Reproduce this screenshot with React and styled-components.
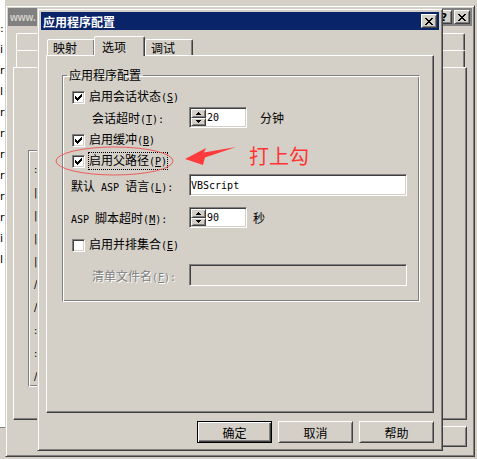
import React from "react";
import styled, { createGlobalStyle, css } from "styled-components";

const FACE = "#d4d0c8";
const SHADOW = "#808080";
const DARK = "#404040";
const NAVY = "#0a246a";

const GlobalStyle = createGlobalStyle`
  html, body { margin: 0; padding: 0; }
  body {
    background: ${FACE};
    font-family: "Noto Sans CJK SC", sans-serif;
    font-size: 12px;
    color: #000;
  }
`;

/* classic 3d edges */
const raised = css`
  border: 1px solid;
  border-color: ${FACE} ${DARK} ${DARK} ${FACE};
  box-shadow: inset 1px 1px #fff, inset -1px -1px ${SHADOW};
`;

const buttonEdge = css`
  border: 1px solid;
  border-color: #fff ${DARK} ${DARK} #fff;
  box-shadow: inset 1px 1px ${FACE}, inset -1px -1px ${SHADOW};
`;

const sunken = css`
  border: 1px solid;
  border-color: ${SHADOW} #fff #fff ${SHADOW};
  box-shadow: inset 1px 1px ${DARK}, inset -1px -1px ${FACE};
`;

const etched = css`
  border: 1px solid;
  border-color: ${SHADOW} #fff #fff ${SHADOW};
  box-shadow: inset 1px 1px #fff, inset -1px -1px ${SHADOW};
`;

const Desktop = styled.div`
  position: relative;
  width: 477px;
  height: 459px;
  overflow: hidden;
  background: ${FACE};
`;

/* list window far behind, only its right sliver shows */
const FarList = styled.ul`
  position: absolute;
  left: -60px;
  top: 0;
  width: 65px;
  height: 428px;
  margin: 0;
  padding: 18px 0 0 60px;
  box-sizing: border-box;
  list-style: none;
  background: #fff;
  border-bottom: 1px solid ${SHADOW};
  font: 11px/21px "DejaVu Sans", sans-serif;
  white-space: nowrap;
`;

/* ---------- window behind ---------- */
const BackWindow = styled.div`
  position: absolute;
  left: 5px;
  top: 5px;
  width: 470px;
  height: 452px;
  box-sizing: border-box;
  ${raised};
  background: ${FACE};
  padding: 2px;
  display: flex;
  flex-direction: column;
`;

const TitleBar = styled.div`
  height: 18px;
  flex: none;
  display: flex;
  align-items: center;
  padding: 0 2px;
  background: ${(p) => (p.$active ? NAVY : SHADOW)};
  color: ${(p) => (p.$active ? "#fff" : FACE)};
  font-weight: 700;
  font-size: 12px;
`;

const Caption = styled.span`
  flex: 1;
  white-space: nowrap;
  overflow: hidden;
  ${(p) =>
    p.$latin &&
    css`
      font-family: "Liberation Sans", sans-serif;
      font-size: 10px;
    `}
`;

const CapButton = styled.span`
  width: 16px;
  height: 14px;
  flex: none;
  box-sizing: border-box;
  ${buttonEdge};
  background: ${FACE};
  margin-left: ${(p) => p.$gap || 0}px;
  display: flex;
  align-items: center;
  justify-content: center;
  color: #000;
  font: 700 11px "DejaVu Sans", sans-serif;
`;

const BackBody = styled.div`
  flex: 1;
  display: flex;
  flex-direction: column;
  padding: 7px 5px 0;
`;

const BackTabRow = styled.div`
  display: flex;
  height: 17px;
  padding: 0 2px 0 3px;
`;

const BackTab = styled.div`
  flex: 1;
  border: 1px solid;
  border-bottom: none;
  border-color: #fff ${DARK} transparent #fff;
  border-radius: 2px 2px 0 0;
  box-shadow: inset -1px 0 ${SHADOW};
`;

const BackPanel = styled.div`
  height: 353px;
  box-sizing: border-box;
  border: 1px solid;
  border-color: #fff ${DARK} ${DARK} #fff;
  box-shadow: inset -1px -1px ${SHADOW};
  padding: 82px 0 0 14px;
`;

const BackGroup = styled.div`
  width: 300px;
  height: 237px;
  box-sizing: border-box;
  ${etched};
  padding: 10px 0 0 5px;
  display: flex;
  flex-direction: column;
  gap: 5px;
  font: 10px/18px "DejaVu Sans", sans-serif;
  white-space: nowrap;
`;

const BackButtons = styled.div`
  display: flex;
  justify-content: flex-end;
  gap: 6px;
  margin-top: 6px;
`;

/* ---------- main dialog ---------- */
const Dialog = styled.div`
  position: absolute;
  left: 37px;
  top: 8px;
  width: 406px;
  height: 443px;
  box-sizing: border-box;
  ${raised};
  background: ${FACE};
  padding: 3px;
  display: flex;
  flex-direction: column;
`;

const DialogBody = styled.div`
  flex: 1;
  display: flex;
  flex-direction: column;
  padding: 6px 5px 0;
`;

const TabStrip = styled.div`
  display: flex;
  align-items: flex-end;
  height: 19px;
  padding-left: 1px;
  position: relative;
  z-index: 1;
`;

const Tab = styled.div`
  width: ${(p) => p.$w}px;
  height: ${(p) => (p.$active ? 20 : 16)}px;
  margin-left: ${(p) => p.$ml || 0}px;
  margin-bottom: ${(p) => (p.$active ? -1 : 0)}px;
  box-sizing: border-box;
  border: 1px solid;
  border-bottom: none;
  border-color: #fff ${DARK} transparent #fff;
  border-radius: 2px 2px 0 0;
  box-shadow: inset -1px 0 ${SHADOW};
  background: ${FACE};
  position: relative;
  z-index: ${(p) => (p.$active ? 2 : 1)};
  display: flex;
  align-items: center;
  padding-left: ${(p) => (p.$active ? 7 : 5)}px;
  padding-bottom: ${(p) => (p.$active ? 1 : 0)}px;
`;

const TabPanel = styled.div`
  height: 358px;
  box-sizing: border-box;
  border: 1px solid;
  border-color: #fff ${DARK} ${DARK} #fff;
  box-shadow: inset -1px -1px ${SHADOW};
  padding: 12px 13px 0 15px;
`;

const Group = styled.fieldset`
  margin: 0;
  min-width: 0;
  padding: 7px 0 15px 8px;
  ${etched};
`;

const Legend = styled.legend`
  margin-left: -4px;
  padding: 0 2px;
  line-height: 14px;
`;

const Row = styled.div`
  display: flex;
  align-items: center;
  height: ${(p) => p.$h}px;
  margin-top: ${(p) => p.$gap || 0}px;
`;

const CheckBox = styled.span`
  width: 13px;
  height: 13px;
  flex: none;
  box-sizing: border-box;
  ${sunken};
  background: #fff;
  margin-left: 1px;
  display: flex;
`;

const CheckLabel = styled.span`
  margin-left: 4px;
  line-height: 14px;
  outline: ${(p) => (p.$focus ? "1px dotted #000" : "none")};
`;

const FieldLabel = styled.span`
  width: 118px;
  flex: none;
  box-sizing: border-box;
  padding-left: ${(p) => p.$indent || 0}px;
  white-space: nowrap;
  color: ${(p) => (p.$disabled ? SHADOW : "#000")};
  text-shadow: ${(p) => (p.$disabled ? "1px 1px #fff" : "none")};
`;

const Lat = styled.span`
  font-family: "DejaVu Sans Mono", monospace;
  font-size: 10px;
`;

const Edit = styled.div`
  width: ${(p) => p.$w}px;
  height: ${(p) => p.$h}px;
  flex: none;
  box-sizing: border-box;
  ${sunken};
  padding: 1px;
  background: ${(p) => (p.$disabled ? FACE : "#fff")};
  display: flex;
  align-items: stretch;
`;

const EditText = styled.span`
  display: flex;
  align-items: center;
  padding-left: ${(p) => p.$pad || 0}px;
  font-family: "DejaVu Sans Mono", monospace;
  font-size: 10px;
`;

const SpinKeys = styled.span`
  width: 15px;
  flex: none;
  display: flex;
  flex-direction: column;
`;

const SpinKey = styled.span`
  flex: 1;
  box-sizing: border-box;
  ${buttonEdge};
  background: ${FACE};
  display: flex;
  align-items: center;
  justify-content: center;
`;

const Unit = styled.span`
  margin-left: ${(p) => p.$gap}px;
`;

const ButtonRow = styled.div`
  display: flex;
  justify-content: flex-end;
  gap: 6px;
  margin-top: 8px;
`;

const PushButton = styled.div`
  width: 75px;
  height: ${(p) => p.$h || 22}px;
  box-sizing: border-box;
  background: ${FACE};
  display: flex;
  align-items: center;
  justify-content: center;
  ${(p) =>
    p.$default
      ? css`
          border: 1px solid #000;
          box-shadow: inset 1px 1px #fff, inset -1px -1px ${DARK},
            inset -2px -2px ${SHADOW};
        `
      : buttonEdge};
`;

/* ---------- red markup ---------- */
const Markup = styled.svg`
  position: absolute;
  left: 0;
  top: 0;
  pointer-events: none;
`;

const Note = styled.span`
  position: absolute;
  left: 249px;
  top: 145px;
  color: #ff3434;
  font-size: 20px;
  line-height: 22px;
`;

const CloseGlyph = () => (
  <svg width="8" height="7" viewBox="0 0 8 7" shapeRendering="crispEdges">
    <path
      fill="#000"
      d="M0 0h2v1H0zM6 0h2v1H6zM1 1h2v1H1zM5 1h2v1H5zM2 2h4v1H2zM3 3h2v1H3zM2 4h4v1H2zM1 5h2v1H1zM5 5h2v1H5zM0 6h2v1H0zM6 6h2v1H6z"
    />
  </svg>
);

const Tick = () => (
  <svg width="11" height="11" viewBox="0 0 11 11" shapeRendering="crispEdges">
    <path
      fill="#000"
      d="M2 4h1v3H2zM3 5h1v3H3zM4 6h1v3H4zM5 5h1v3H5zM6 4h1v3H6zM7 3h1v3H7zM8 2h1v3H8z"
    />
  </svg>
);

const Arrow = ({ up }) => (
  <svg width="5" height="3" viewBox="0 0 5 3" shapeRendering="crispEdges">
    <path
      fill="#000"
      d={up ? "M2 0h1v1H2zM1 1h3v1H1zM0 2h5v1H0z" : "M0 0h5v1H0zM1 1h3v1H1zM2 2h1v1H2z"}
    />
  </svg>
);

const Check = ({ on, label, focus }) => (
  <>
    <CheckBox>{on && <Tick />}</CheckBox>
    <CheckLabel $focus={focus}>{label}</CheckLabel>
  </>
);

const Spinner = ({ value }) => (
  <Edit $w={58} $h={21}>
    <SpinKeys>
      <SpinKey>
        <Arrow up />
      </SpinKey>
      <SpinKey>
        <Arrow />
      </SpinKey>
    </SpinKeys>
    <EditText $pad={1}>{value}</EditText>
  </Edit>
);

const acc = (k) => (
  <Lat>
    (<u>{k}</u>)
  </Lat>
);

const farItems = [":", "i", "r", "l", "r", "r", "r", "r", "r", "r", "i", "l"];
const backLabels = [":", "|", "|", "|", "|", "/", "/", ":", ":", "/"];

export default function App() {
  return (
    <Desktop>
      <GlobalStyle />

      <FarList>
        {farItems.map((t, i) => (
          <li key={i}>{t}</li>
        ))}
      </FarList>

      <BackWindow>
        <TitleBar>
          <Caption $latin>www.</Caption>
          <CapButton>?</CapButton>
          <CapButton $gap={2}>
            <CloseGlyph />
          </CapButton>
        </TitleBar>
        <BackBody>
          <BackTabRow>
            {[0, 1, 2, 3, 4, 5].map((i) => (
              <BackTab key={i} />
            ))}
          </BackTabRow>
          <BackTabRow>
            {[0, 1, 2, 3, 4].map((i) => (
              <BackTab key={i} />
            ))}
          </BackTabRow>
          <BackPanel>
            <BackGroup>
              {backLabels.map((t, i) => (
                <span key={i}>{t}</span>
              ))}
            </BackGroup>
          </BackPanel>
          <BackButtons>
            <PushButton $h={21} />
            <PushButton $h={21} />
            <PushButton $h={21} />
          </BackButtons>
        </BackBody>
      </BackWindow>

      <Dialog>
        <TitleBar $active>
          <Caption>应用程序配置</Caption>
          <CapButton>
            <CloseGlyph />
          </CapButton>
        </TitleBar>
        <DialogBody>
          <TabStrip>
            <Tab $w={48}>映射</Tab>
            <Tab $w={51} $ml={-1} $active>
              选项
            </Tab>
            <Tab $w={48}>调试</Tab>
          </TabStrip>
          <TabPanel>
            <Group>
              <Legend>应用程序配置</Legend>
              <Row $h={16}>
                <Check on label={<>启用会话状态{acc("S")}</>} />
              </Row>
              <Row $h={21} $gap={2}>
                <FieldLabel $indent={21}>
                  会话超时{acc("T")}
                  <Lat>:</Lat>
                </FieldLabel>
                <Spinner value="20" />
                <Unit $gap={13}>分钟</Unit>
              </Row>
              <Row $h={16} $gap={4}>
                <Check on label={<>启用缓冲{acc("B")}</>} />
              </Row>
              <Row $h={16} $gap={5}>
                <Check on focus label={<>启用父路径{acc("P")}</>} />
              </Row>
              <Row $h={22} $gap={5}>
                <FieldLabel>
                  默认<Lat> ASP </Lat>语言{acc("L")}
                  <Lat>:</Lat>
                </FieldLabel>
                <Edit $w={218} $h={22}>
                  <EditText>VBScript</EditText>
                </Edit>
              </Row>
              <Row $h={21} $gap={11}>
                <FieldLabel>
                  <Lat>ASP </Lat>脚本超时{acc("M")}
                  <Lat>:</Lat>
                </FieldLabel>
                <Spinner value="90" />
                <Unit $gap={6}>秒</Unit>
              </Row>
              <Row $h={16} $gap={9}>
                <Check label={<>启用并排集合{acc("E")}</>} />
              </Row>
              <Row $h={22} $gap={11}>
                <FieldLabel $indent={21} $disabled>
                  清单文件名{acc("F")}
                  <Lat>:</Lat>
                </FieldLabel>
                <Edit $w={218} $h={22} $disabled />
              </Row>
            </Group>
          </TabPanel>
          <ButtonRow>
            <PushButton $default>确定</PushButton>
            <PushButton>取消</PushButton>
            <PushButton>帮助</PushButton>
          </ButtonRow>
        </DialogBody>
      </Dialog>

      <Markup width="477" height="459" viewBox="0 0 477 459">
        <ellipse cx="114.5" cy="161" rx="58.5" ry="14" fill="none" stroke="#ec5c5c" strokeWidth="1" />
        <polygon points="185,159 206,148 204,152.5 236,147 205,157.5 203,165" fill="#ff3b3b" />
      </Markup>
      <Note>打上勾</Note>
    </Desktop>
  );
}
